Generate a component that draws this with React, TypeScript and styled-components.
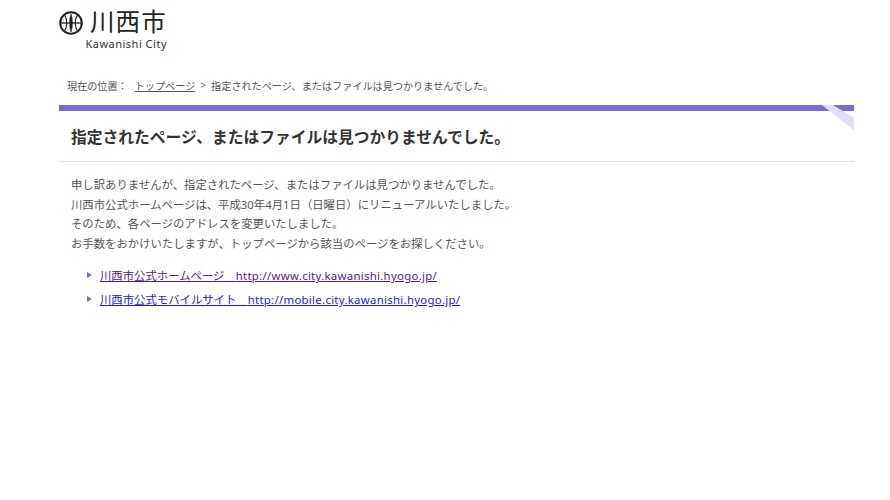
import styled, { createGlobalStyle } from 'styled-components';

const GlobalStyle = createGlobalStyle`
  html, body {
    margin: 0;
    padding: 0;
    background: #fff;
    color: #333;
    font-family: "Noto Sans", "Noto Sans CJK JP", sans-serif;
  }
`;

const Page = styled.div`
  width: 795px;
  height: 500px;
  margin-left: 59px;
  overflow: hidden;
`;

const Header = styled.header`
  display: flex;
  flex-direction: column;
  align-items: flex-end;
  width: 108px;
  padding-top: 9px;
`;

const LogoTop = styled.div`
  display: flex;
  align-items: center;
  justify-content: space-between;
  width: 100%;
  height: 28px;
`;

const LogoKanji = styled.span`
  align-self: flex-start;
  font-family: "Noto Sans CJK JP", sans-serif;
  font-size: 24.5px;
  font-weight: 400;
  line-height: 24px;
  letter-spacing: 1.2px;
  color: #222;
  white-space: nowrap;
`;

const LogoCity = styled.span`
  font-size: 11px;
  line-height: 13px;
  letter-spacing: 0.5px;
  color: #333;
  white-space: nowrap;
`;

const Breadcrumb = styled.nav`
  display: flex;
  align-items: center;
  height: 16px;
  margin-top: 27px;
  padding-left: 8px;
  font-size: 10.15px;
  color: #555;
  white-space: nowrap;
`;

const CrumbLabel = styled.span`
  margin-right: 7px;
`;

const CrumbLink = styled.a`
  color: #555;
  text-decoration: underline;
`;

const CrumbSep = styled.span`
  margin: 0 5px;
`;

const Title = styled.div`
  position: relative;
  margin-top: 12px;
  border-top: 6px solid #7b6bd3;
  border-bottom: 1px solid #e4e1f5;
  padding: 0 12px;
  height: 50px;
  display: flex;
  align-items: center;
`;

const Heading = styled.h1`
  margin: 0;
  font-size: 15.75px;
  font-weight: 700;
  color: #333;
`;

const Stripe = styled.svg`
  position: absolute;
  top: -6px;
  right: 0;
`;

const Body = styled.div`
  padding: 13px 12px 0;
`;

const Paragraph = styled.p`
  margin: 0;
  font-size: 11.36px;
  line-height: 19.6px;
  color: #555;
`;

const LinkList = styled.ul`
  list-style: none;
  margin: 12px 0 0;
  padding: 0 0 0 16px;
  display: flex;
  flex-direction: column;
  gap: 4px;
`;

const LinkItem = styled.li`
  display: flex;
  align-items: center;
  gap: 8px;
  height: 20px;
  font-size: 11.36px;
`;

const Marker = styled.i`
  width: 0;
  height: 0;
  border-left: 5px solid #7b6bd3;
  border-top: 3.5px solid transparent;
  border-bottom: 3.5px solid transparent;
`;

const ExtLink = styled.a<{ $visited?: boolean }>`
  color: ${p => (p.$visited ? '#551a8b' : '#1a1ae6')};
  text-decoration: underline;
`;

const Url = styled.span`
  letter-spacing: 0.3px;
`;

const Logo = () => (
  <svg width="24" height="24" viewBox="0 0 24 24" fill="none" stroke="#222">
    <circle cx="12" cy="12" r="10.8" strokeWidth="2" />
    <path d="M1.500 12h21" strokeWidth="1.300" />
    <path d="M12 3c-1.800 4-1.800 14 0 18c1.800-4 1.800-14 0-18z" fill="#222" strokeWidth="0.600" />
    <path d="M5.500 4c3 4.500 3 11.500 0 16M18.500 4c-3 4.500-3 11.500 0 16" strokeWidth="1.200" />
  </svg>
);

const App = () => (
  <Page>
    <GlobalStyle />
    <Header>
      <LogoTop>
        <Logo />
        <LogoKanji>川西市</LogoKanji>
      </LogoTop>
      <LogoCity>Kawanishi City</LogoCity>
    </Header>
    <Breadcrumb>
      <CrumbLabel>現在の位置：</CrumbLabel>
      <CrumbLink href="#">トップページ</CrumbLink>
      <CrumbSep>&gt;</CrumbSep>
      指定されたページ、またはファイルは見つかりませんでした。
    </Breadcrumb>
    <Title>
      <Heading>指定されたページ、またはファイルは見つかりませんでした。</Heading>
      <Stripe width="32" height="25" viewBox="0 0 32 25">
        <polygon points="0,0 11,0 32,13 32,25" fill="#e2ddf6" />
      </Stripe>
    </Title>
    <Body>
      <Paragraph>
        申し訳ありませんが、指定されたページ、またはファイルは見つかりませんでした。
        <br />
        川西市公式ホームページは、平成30年4月1日（日曜日）にリニューアルいたしました。
        <br />
        そのため、各ページのアドレスを変更いたしました。
        <br />
        お手数をおかけいたしますが、トップページから該当のページをお探しください。
      </Paragraph>
      <LinkList>
        <LinkItem>
          <Marker />
          <ExtLink $visited href="#">川西市公式ホームページ　<Url>http://www.city.kawanishi.hyogo.jp/</Url></ExtLink>
        </LinkItem>
        <LinkItem>
          <Marker />
          <ExtLink href="#">川西市公式モバイルサイト　<Url>http://mobile.city.kawanishi.hyogo.jp/</Url></ExtLink>
        </LinkItem>
      </LinkList>
    </Body>
  </Page>
);

export default App;
